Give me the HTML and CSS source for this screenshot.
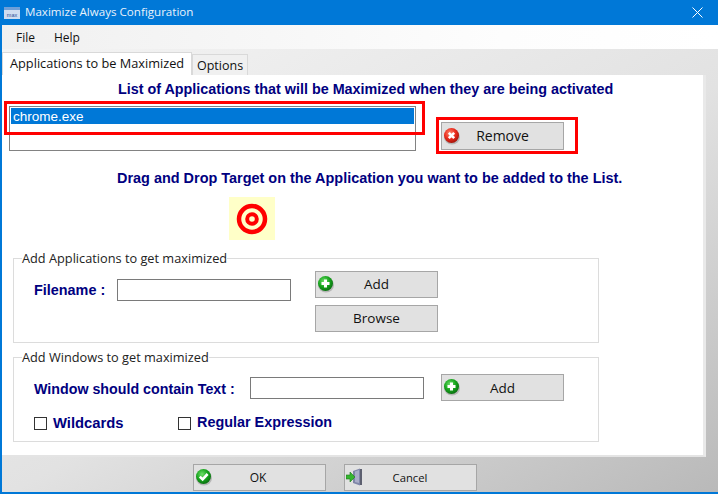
FILE: index.html
```html
<!DOCTYPE html>
<html lang="en">
<head>
<meta charset="utf-8">
<title>Maximize Always Configuration</title>
<link rel="stylesheet" href="styles.css">
</head>
<body>
<svg class="defs" width="0" height="0" aria-hidden="true">
  <defs>
    <radialGradient id="gRed" cx="40%" cy="35%" r="70%"><stop offset="0" stop-color="#ff8a70"/><stop offset=".55" stop-color="#e92a1c"/><stop offset="1" stop-color="#9c1208"/></radialGradient>
    <radialGradient id="gGreen" cx="40%" cy="35%" r="70%"><stop offset="0" stop-color="#6fe06a"/><stop offset=".55" stop-color="#16a31c"/><stop offset="1" stop-color="#0a6a10"/></radialGradient>
    <symbol id="i-remove" viewBox="0 0 18 18"><ellipse cx="9" cy="10" rx="8" ry="7.5" fill="#999" opacity=".6"/><circle cx="8.5" cy="8.5" r="7.5" fill="url(#gRed)"/><path d="M5.8 5.8l5.4 5.4M11.2 5.8l-5.4 5.4" stroke="#fff" stroke-width="2.6"/></symbol>
    <symbol id="i-add" viewBox="0 0 18 18"><ellipse cx="9" cy="10" rx="8" ry="7.5" fill="#999" opacity=".6"/><circle cx="8.5" cy="8.5" r="7.5" fill="url(#gGreen)"/><path d="M8.5 4.5v8M4.5 8.5h8" stroke="#fff" stroke-width="3"/></symbol>
    <symbol id="i-ok" viewBox="0 0 18 18"><ellipse cx="9" cy="10" rx="8" ry="7.5" fill="#999" opacity=".6"/><circle cx="8.5" cy="8.5" r="7.5" fill="url(#gGreen)"/><path d="M4.8 8.6l2.8 2.8 5-5.4" fill="none" stroke="#fff" stroke-width="2.6"/></symbol>
  </defs>
</svg>
<div class="window">
  <header class="titlebar">
    <svg class="app-icon" width="16" height="16" viewBox="0 0 16 16"><rect y="2" width="16" height="12" fill="#e8eef8"/><rect y="2" width="16" height="3" fill="#6f9fd8"/><rect y="5" width="16" height="9" fill="#cfdcf0"/><text x="8" y="11.5" font-size="5.5" text-anchor="middle" fill="#2d4f9a" font-family="Liberation Sans">max</text></svg>
    <span class="title">Maximize Always Configuration</span>
    <svg class="close" width="11" height="11" viewBox="0 0 11 11"><path d="M.5.5l10 10M10.5.5l-10 10" stroke="#fff" stroke-width="1" fill="none"/></svg>
  </header>
  <nav class="menubar"><span class="menu-file">File</span><span>Help</span></nav>
  <div class="tabs">
    <div class="tab tab-active">Applications to be Maximized</div>
    <div class="tab">Options</div>
  </div>
  <main class="page">
    <h2 class="heading heading-list">List of Applications that will be Maximized when they are being activated</h2>
    <div class="list-row">
      <div class="listbox"><div class="list-item">chrome.exe</div></div>
      <button class="btn btn-remove" type="button"><svg class="ico"><use href="#i-remove"/></svg>Remove</button>
    </div>
    <h2 class="heading heading-drag">Drag and Drop Target on the Application you want to be added to the List.</h2>
    <div class="target">
      <svg width="32" height="32" viewBox="0 0 32 32"><circle cx="16" cy="16" r="13" fill="none" stroke="#f00" stroke-width="4.5"/><circle cx="16" cy="16" r="4.8" fill="none" stroke="#f00" stroke-width="4"/></svg>
    </div>
    <fieldset class="group group-apps">
      <legend>Add Applications to get maximized</legend>
      <label class="label label-file">Filename :</label>
      <div class="field field-file"></div>
      <div class="btn-stack">
        <button class="btn" type="button"><svg class="ico"><use href="#i-add"/></svg>Add</button>
        <button class="btn" type="button">Browse</button>
      </div>
    </fieldset>
    <fieldset class="group group-windows">
      <legend>Add Windows to get maximized</legend>
      <div class="win-row">
        <label class="label label-win">Window should contain Text :</label>
        <div class="field field-win"></div>
        <button class="btn" type="button"><svg class="ico"><use href="#i-add"/></svg>Add</button>
      </div>
      <div class="check-row">
        <span class="check check-wild"><i class="box"></i><span class="label label-wild">Wildcards</span></span>
        <span class="check check-regex"><i class="box"></i><span class="label">Regular Expression</span></span>
      </div>
    </fieldset>
  </main>
  <footer class="footer">
    <button class="btn btn-foot btn-ok" type="button"><svg class="ico"><use href="#i-ok"/></svg>OK</button>
    <button class="btn btn-foot btn-cancel" type="button">
      <svg class="ico ico-cancel" viewBox="0 0 18 18"><path d="M7 3l7-2.5v17L7 15z" fill="#7f86a8"/><path d="M9 3.5l4-1.5v13l-4-1z" fill="#a9aec8"/><rect x="14" y="1" width="2" height="16" fill="#5d6070"/><path d="M0 7h4V4l5 5-5 5v-3H0z" fill="#35b52f" stroke="#1d7a1a" stroke-width=".6"/></svg>Cancel</button>
  </footer>
  <div class="mark mark-list"></div>
  <div class="mark mark-remove"></div>
</div>
</body>
</html>
```

FILE: styles.css
```css
* { box-sizing: border-box; }
html, body { margin: 0; padding: 0; }
body { width: 718px; height: 494px; overflow: hidden; font-family: "Open Sans", "Liberation Sans", sans-serif; font-size: 12px; color: #111; }
.defs { position: absolute; }
.window { position: relative; width: 718px; height: 494px; display: flex; flex-direction: column; border-left: 2px solid #0078d7; border-bottom: 2px solid #0078d7; background: linear-gradient(150deg, #f6f6f6 0%, #e2e2e2 55%, #b9b9b9 100%); }
.titlebar { height: 25px; margin-left: -2px; padding: 0 15px 0 4px; display: flex; align-items: center; background: #0078d7; color: #e8f2fb; flex: none; }
.app-icon { flex: none; }
.title { margin: -2px 0 0 5px; font-size: 11.6px; flex: 1; white-space: nowrap; }
.menubar { height: 24px; flex: none; display: flex; align-items: center; padding-left: 14px; font-size: 12px; background: linear-gradient(90deg, #f0f0f0, #fdfdfd 70%, #fff); }
.menu-file { margin-right: 19px; }
.tabs { height: 26px; flex: none; display: flex; align-items: flex-end; }
.tab { height: 21px; padding: 2px 4px 0 4px; font-size: 12.5px; line-height: 17px; background: #f0f0f0; border: 1px solid #d9d9d9; border-bottom: 0; }
.tab-active { height: 23px; width: 190px; padding: 2px 0 0 7px; margin-right: 0; background: #fff; font-size: 12.75px; border-color: #d9d9d9; }
.page { width: 704px; height: 382px; flex: none; background: #fff; border-right: 3px solid #e9e9e9; border-bottom: 2px solid #e4e4e4; padding: 5px 0 0 7px; }
.heading { margin: 0; font: bold 14.35px/18px "Liberation Sans", Arial, sans-serif; color: #000080; white-space: nowrap; }
.heading-list { padding-left: 109px; }
.list-row { display: flex; align-items: flex-start; margin-top: 8px; }
.listbox { width: 407px; height: 45px; border: 1px solid #828282; padding: 1px; background: #fff; }
.list-item { height: 16px; background: #0078d7; color: #fff; font: 13.5px/18px "Liberation Sans", Arial, sans-serif; padding-left: 2px; }
.btn { width: 123px; height: 27px; padding: 0 0 2px; border: 1px solid #a6a6a6; background: #e1e1e1; position: relative; font: 13.5px "Open Sans", "Liberation Sans", sans-serif; color: #111; display: block; text-align: center; }
.btn-remove { margin: 16px 0 0 25px; height: 28px; font-size: 14px; }
.ico { position: absolute; left: 1px; top: 3px; width: 18px; height: 18px; }
.btn-remove .ico { top: 4px; }
.heading-drag { margin-top: 18px; padding-left: 108px; font-size: 14.45px; }
.target { width: 46px; height: 43px; margin: 10px 0 0 220px; background: #ffffc8; display: flex; align-items: center; justify-content: center; }
.group { margin: 0; min-width: 0; border: 1px solid #dcdcdc; padding: 0; position: relative; }
.group legend { padding: 0; margin-left: 8px; font-size: 12.75px; line-height: 18px; color: #222; white-space: nowrap; }
.group-apps { width: 586px; height: 94px; margin: 9px 0 0 4px; display: flex; align-items: flex-start; }
.label { font: bold 14.4px/18px "Liberation Sans", Arial, sans-serif; color: #000080; white-space: nowrap; }
.label-wild { font-size: 14.8px; }
.label-file { margin: 14px 0 0 20px; width: 83px; }
.field { height: 22px; width: 174px; background: #fff; border: 1px solid #7a7a7a; }
.field-file { margin-top: 12px; }
.btn-stack { margin: 4px 0 0 24px; display: flex; flex-direction: column; gap: 7px; }
.group-windows { width: 586px; height: 94px; margin: 5px 0 0 4px; }
.win-row { display: flex; align-items: flex-start; margin: 0 0 0 20px; }
.label-win { width: 216px; margin-top: 14px; font-size: 14.25px; }
.field-win { margin-top: 11px; }
.win-row .btn { margin: 8px 0 0 17px; padding-bottom: 0; }
.check-row { display: flex; margin: 13px 0 0 20px; }
.check { display: flex; align-items: center; }
.check-wild { width: 144px; }
.box { display: block; width: 13px; height: 13px; border: 1px solid #333; background: #fff; margin-right: 6px; }
.check-regex .label { margin-top: -2px; }
.footer { flex: 1; display: flex; gap: 18px; padding: 7px 0 0 191px; }
.btn-foot { width: 133px; height: 27px; font-size: 12px; padding-bottom: 0; }
.btn-ok { padding-right: 3px; }
.btn-cancel { padding-right: 1px; font-size: 11.3px; }
.ico-cancel { left: 1px; top: 3px; }
.mark { position: absolute; border: 3px solid #f00; pointer-events: none; }
.mark-list { left: 2px; top: 101px; width: 421px; height: 34px; }
.mark-remove { left: 434px; top: 117px; width: 142px; height: 37px; }
```
